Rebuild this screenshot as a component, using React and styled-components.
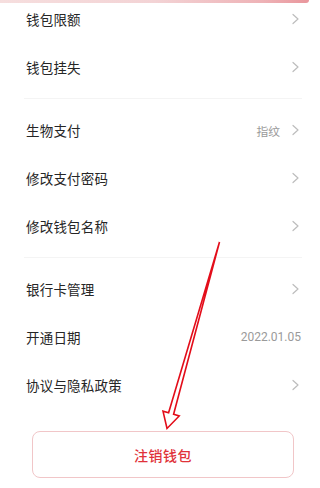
import React from "react";
import styled, { createGlobalStyle } from "styled-components";

const Global = createGlobalStyle`
  html, body { margin: 0; padding: 0; background: #fff; }
  body { font-family: "Noto Sans CJK SC", "Noto Sans", sans-serif; }
  * { box-sizing: border-box; }
`;

const Page = styled.div`
  position: relative;
  width: 320px;
  height: 488px;
  overflow: hidden;
  background: #fff;
`;

const TopStrip = styled.div`
  height: 3px;
  width: 309px;
  border-bottom-right-radius: 3px;
  background: linear-gradient(90deg, #f6dede 0%, #f3d3d5 50%, #eeb2b6 85%, #e9969c 100%);
`;

const List = styled.div`
  display: flex;
  flex-direction: column;
`;

const Row = styled.div`
  display: flex;
  align-items: center;
  height: ${(p) => (p.$first ? "40px" : "48px")};
  padding: 0 19px ${(p) => (p.$first ? "8px" : "0")} 26px;
`;

const Label = styled.span`
  flex: 1;
  font-size: 13.5px;
  line-height: 20px;
  color: #262626;
  letter-spacing: 0.2px;
`;

const Value = styled.span`
  font-family: Roboto, "Noto Sans CJK SC", sans-serif;
  font-size: ${(p) => (p.$num ? "12px" : "11.8px")};
  color: #9a9a9a;
  margin-right: ${(p) => (p.$withArrow ? "11px" : "0")};
`;

const Divider = styled.div`
  height: 15px;
  display: flex;
  align-items: center;
  padding: 0 18px 0 24px;
  &::after {
    content: "";
    flex: 1;
    height: 1px;
    background: #f4f4f4;
  }
`;

const ButtonWrap = styled.div`
  padding: 22px 26px 0 32px;
`;

const CancelButton = styled.button`
  width: 262px;
  height: 47px;
  border: 1px solid #f1c6c8;
  border-radius: 8px;
  background: #fff;
  color: #e0323a;
  font-family: "Noto Sans CJK SC", sans-serif;
  font-size: 14px;
  font-weight: 500;
  letter-spacing: 0.5px;
  display: flex;
  align-items: center;
  justify-content: center;
`;

const ArrowLayer = styled.svg`
  position: absolute;
  left: 0;
  top: 0;
  pointer-events: none;
`;

const Chevron = () => (
  <svg width="10" height="12" viewBox="0 0 10 12">
    <polyline points="2,1.5 7,6 2,10.5" fill="none" stroke="#bdbdbd" strokeWidth="1.2" strokeLinecap="round" strokeLinejoin="round" />
  </svg>
);

const Item = ({ label, value, num, arrow = true, first }) => (
  <Row $first={first}>
    <Label>{label}</Label>
    {value && (
      <Value $num={num} $withArrow={arrow}>
        {value}
      </Value>
    )}
    {arrow && <Chevron />}
  </Row>
);

export default function App() {
  return (
    <Page>
      <Global />
      <TopStrip />
      <List>
        <Item first label="钱包限额" />
        <Item label="钱包挂失" />
        <Divider />
        <Item label="生物支付" value="指纹" />
        <Item label="修改支付密码" />
        <Item label="修改钱包名称" />
        <Divider />
        <Item label="银行卡管理" />
        <Item label="开通日期" value="2022.01.05" num arrow={false} />
        <Item label="协议与隐私政策" />
      </List>
      <ButtonWrap>
        <CancelButton>注销钱包</CancelButton>
      </ButtonWrap>
      <ArrowLayer width="320" height="488" viewBox="0 0 320 488">
        <polygon
          points="219.5,242 173.6,414.3 179.2,416 167,428.5 163,411.2 168.6,412.8"
          fill="none"
          stroke="#e30d1a"
          strokeWidth="1.6"
          strokeLinejoin="miter"
        />
      </ArrowLayer>
    </Page>
  );
}
